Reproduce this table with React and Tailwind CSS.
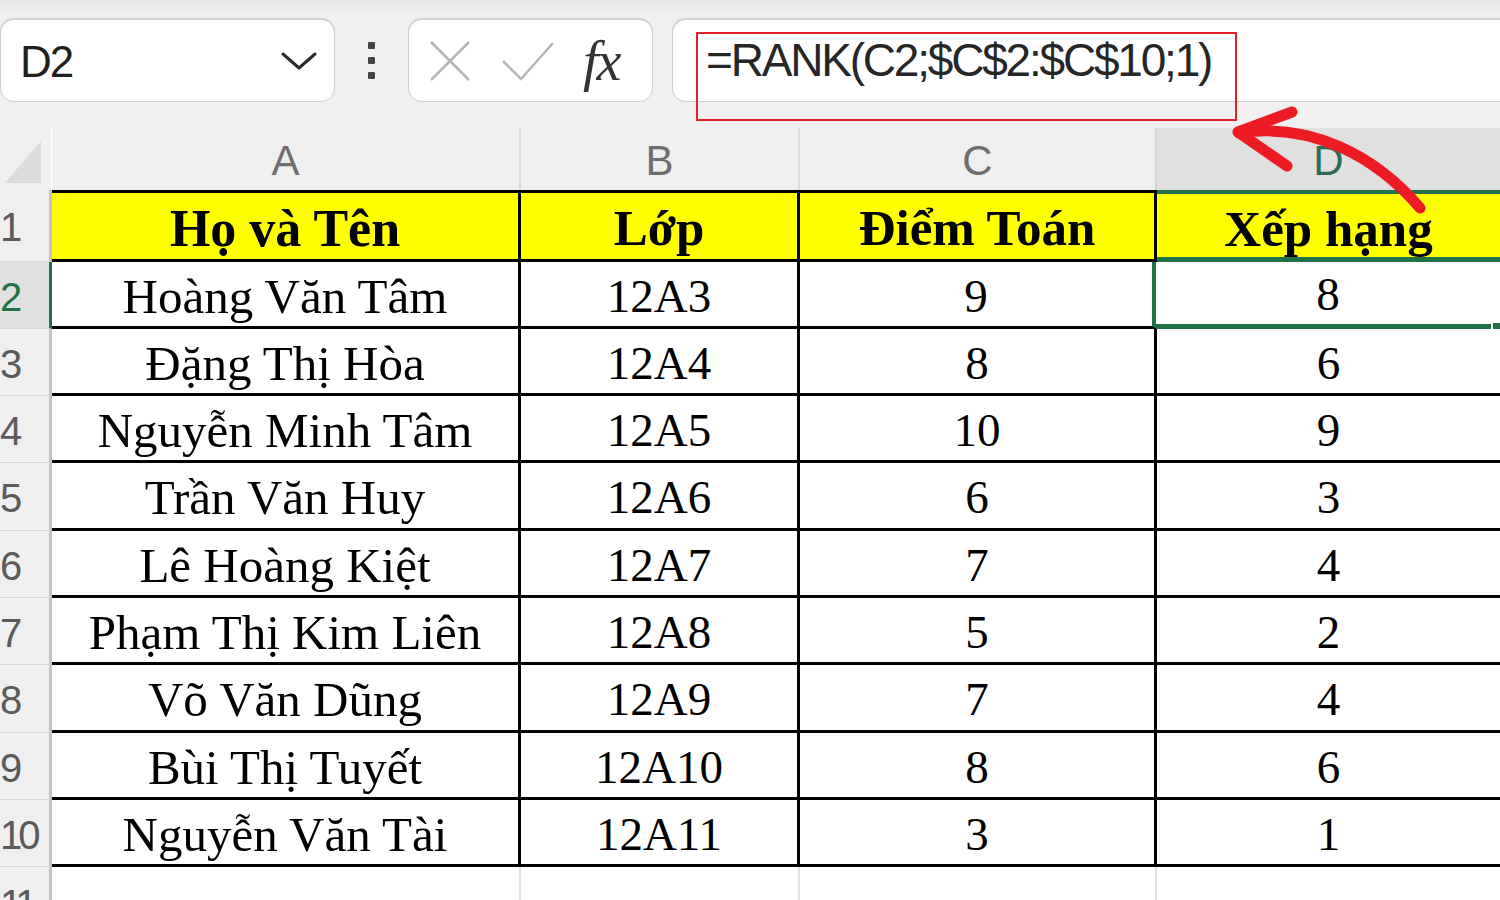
import React from "react";

const rows = [
  ["Hoàng Văn Tâm", "12A3", "9", "8"],
  ["Đặng Thị Hòa", "12A4", "8", "6"],
  ["Nguyễn Minh Tâm", "12A5", "10", "9"],
  ["Trần Văn Huy", "12A6", "6", "3"],
  ["Lê Hoàng Kiệt", "12A7", "7", "4"],
  ["Phạm Thị Kim Liên", "12A8", "5", "2"],
  ["Võ Văn Dũng", "12A9", "7", "4"],
  ["Bùi Thị Tuyết", "12A10", "8", "6"],
  ["Nguyễn Văn Tài", "12A11", "3", "1"],
];
const tall = [false, false, false, true, false, false, true, false, false];

function Toolbar() {
  return (
    <div className="h-[128px] bg-gradient-to-b from-[#e6e6e6] from-[0px] to-[#f0f0f0] to-[18px] pt-[19px] flex items-start">
      {/* name box */}
      <div className="w-[335px] h-[83px] bg-white rounded-[14px] border border-[#d2d2d2] shadow-[0_-1px_0_#cfcfcf] flex items-center justify-between pl-[19px] pr-[16px]">
        <span className="font-['Liberation_Sans',sans-serif] text-[44px] leading-none text-[#1f1f1f] tracking-[-2px] mt-[3px]">D2</span>
        <svg width="38" height="22" viewBox="0 0 38 22" fill="none">
          <path d="M3 4 L19 18 L35 4" stroke="#2b2b2b" strokeWidth="3" strokeLinecap="round" strokeLinejoin="round" />
        </svg>
      </div>
      {/* dots */}
      <div className="w-[73px] h-[83px] flex flex-col items-center justify-center gap-[8px]">
        <div className="w-[7px] h-[7px] rounded-[1px] bg-[#444]" />
        <div className="w-[7px] h-[7px] rounded-[1px] bg-[#444]" />
        <div className="w-[7px] h-[7px] rounded-[1px] bg-[#444]" />
      </div>
      {/* fx box */}
      <div className="w-[245px] h-[83px] bg-white rounded-[14px] border border-[#d2d2d2] shadow-[0_-1px_0_#cfcfcf] flex items-center pl-[20px] gap-[30px]">
        <svg width="42" height="42" viewBox="0 0 42 42" fill="none">
          <path d="M2 2 L40 40 M40 2 L2 40" stroke="#b4b4b4" strokeWidth="2.5" />
        </svg>
        <svg width="54" height="40" viewBox="0 0 54 40" fill="none">
          <path d="M2 20 L20 38 L52 2" stroke="#b4b4b4" strokeWidth="2.5" />
        </svg>
        <span className="font-['Liberation_Serif',serif] italic text-[56px] leading-none text-[#333] tracking-[-2px] -ml-[2px]">fx</span>
      </div>
      <div className="w-[19px]" />
      {/* formula box */}
      <div className="flex-1 h-[83px] bg-white rounded-l-[14px] border border-r-0 border-[#d2d2d2] shadow-[0_-1px_0_#cfcfcf] flex items-center pl-[33px]">
        <span className="font-['Liberation_Sans',sans-serif] text-[46px] leading-none text-[#262626] tracking-[-2.2px] -mt-[1px]">
          =RANK(C2;$C$2:$C$10;1)
        </span>
      </div>
    </div>
  );
}

function ColumnHeaders() {
  const letter = "font-['Liberation_Sans',sans-serif] text-[42px] leading-none";
  return (
    <div className="flex h-[62px]">
      <div className="w-[52px] relative border-r border-white">
        <svg className="absolute left-[5px] top-[13px]" width="36" height="42" viewBox="0 0 36 42">
          <path d="M36 0 L36 42 L0 42 Z" fill="#dcdcdc" />
        </svg>
      </div>
      <div className={`w-[469px] flex items-center justify-center border-r-2 border-[#dadada] text-[#6e6e6e] pt-[3px] ${letter}`}>A</div>
      <div className={`w-[279px] flex items-center justify-center border-r-2 border-[#dadada] text-[#6e6e6e] pt-[3px] ${letter}`}>B</div>
      <div className={`w-[357px] flex items-center justify-center border-r-2 border-[#d4d4d4] text-[#6e6e6e] pt-[3px] ${letter}`}>C</div>
      <div className={`flex-1 flex items-center justify-center bg-[#e0e0e0] text-[#2e6b55] pt-[3px] ${letter}`}>D</div>
    </div>
  );
}

function RowHead({ n, selected, h }) {
  return (
    <div
      className={`w-[52px] shrink-0 flex items-center border-b border-[#d6d6d6] border-r-[3px] font-['Liberation_Sans',sans-serif] text-[40px] leading-none tracking-[-4px] pt-[3px] ${h} ${
        selected ? "bg-[#e0e0e0] border-r-[#217346] text-[#217346]" : "border-r-[#c4c4c4] text-[#5a5a5a]"
      }`}
    >
      <span>{n}</span>
    </div>
  );
}

const serif = "font-['Liberation_Serif','Times_New_Roman',serif] leading-none text-black";

export default function App() {
  return (
    <div className="relative w-[1500px] h-[900px] overflow-hidden bg-[#efefef]">
      <Toolbar />
      <ColumnHeaders />

      {/* header row 1 */}
      <div className="flex h-[72px]">
        <RowHead n="1" h="h-[72px]" />
        <div className={`w-[469px] bg-[#ffff00] border-t-[3px] border-b-[3px] border-r-[3px] border-black flex items-center justify-center font-bold text-[52px] pt-[5px] ${serif}`}>Họ và Tên</div>
        <div className={`w-[279px] bg-[#ffff00] border-t-[3px] border-b-[3px] border-r-[3px] border-black flex items-center justify-center font-bold text-[51px] pt-[5px] ${serif}`}>Lớp</div>
        <div className={`w-[357px] bg-[#ffff00] border-t-[3px] border-b-[3px] border-r-[3px] border-black flex items-center justify-center font-bold text-[51px] pt-[5px] ${serif}`}>Điểm Toán</div>
        <div className={`flex-1 bg-[#ffff00] border-t-[4px] border-t-[#217346] border-b-[5px] border-b-[#217346] flex items-center justify-center font-bold text-[51px] pt-[7px] ${serif}`}>Xếp hạng</div>
      </div>

      {rows.map((r, i) => {
        const h = tall[i] ? "h-[68px]" : "h-[67px]";
        const sel = i === 0;
        return (
          <div key={i} className={`flex ${h}`}>
            <RowHead n={String(i + 2)} selected={sel} h={h} />
            <div className={`w-[469px] bg-white border-b-[3px] border-r-[3px] border-black flex items-center justify-center text-[49px] pt-[4px] ${serif}`}>{r[0]}</div>
            <div className={`w-[279px] bg-white border-b-[3px] border-r-[3px] border-black flex items-center justify-center text-[47px] pt-[4px] ${serif}`}>{r[1]}</div>
            <div
              className={`w-[357px] bg-white border-b-[3px] border-b-black flex items-center justify-center text-[47px] pt-[4px] ${serif} ${
                sel ? "border-r-[5px] border-r-[#217346]" : "border-r-[3px] border-r-black"
              }`}
            >
              {r[2]}
            </div>
            <div
              className={`relative flex-1 bg-white flex items-center justify-center text-[47px] ${serif} ${
                sel ? "border-b-[5px] border-b-[#217346] pt-[2px] -ml-[1px]" : "border-b-[3px] border-b-black pt-[4px]"
              }`}
            >
              {r[3]}
              {sel && <div className="absolute right-0 -bottom-[8px] w-[9px] h-[11px] bg-[#217346] border-l-2 border-t-2 border-white" />}
            </div>
          </div>
        );
      })}

      {/* row 11 */}
      <div className="flex h-[33px]">
        <div className="w-[52px] shrink-0 border-r-[3px] border-[#c4c4c4] font-['Liberation_Sans',sans-serif] text-[40px] leading-none tracking-[-4px] text-[#5a5a5a] pt-[17px]">
          <span>11</span>
        </div>
        <div className="w-[469px] bg-white border-r-2 border-[#e2e2e2]" />
        <div className="w-[279px] bg-white border-r-2 border-[#e2e2e2]" />
        <div className="w-[357px] bg-white border-r-2 border-[#e2e2e2]" />
        <div className="flex-1 bg-white" />
      </div>

      {/* red annotation */}
      <div className="absolute left-[696px] top-[32px] w-[541px] h-[89px] border-2 border-[#e3202b]" />
      <svg className="absolute left-0 top-0 pointer-events-none" width="1500" height="900" viewBox="0 0 1500 900">
        <path d="M1420 208 C1375 155, 1310 122, 1239 133" fill="none" stroke="#ed1c24" strokeWidth="11" strokeLinecap="round" />
        <path d="M1292 112 L1238 132 L1287 166" fill="none" stroke="#ed1c24" strokeWidth="11" strokeLinecap="round" strokeLinejoin="round" />
      </svg>
    </div>
  );
}
